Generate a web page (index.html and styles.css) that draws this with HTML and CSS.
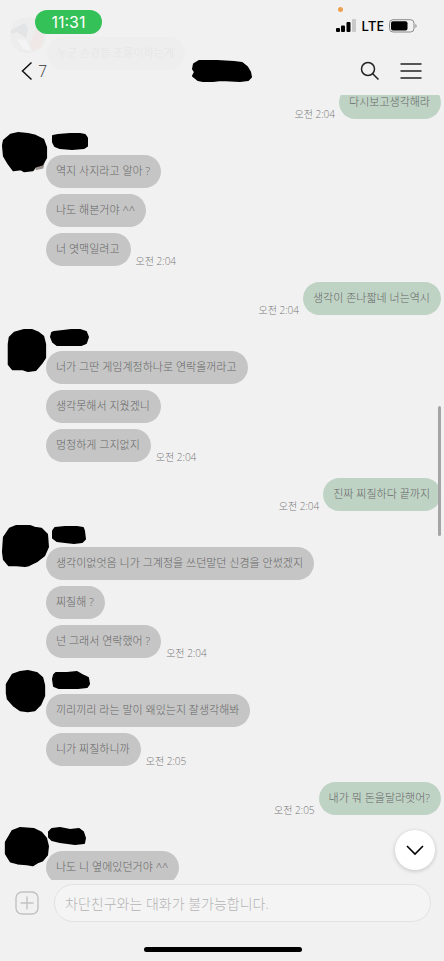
FILE: index.html
```html
<!DOCTYPE html>
<html lang="ko">
<head>
<meta charset="utf-8">
<meta name="viewport" content="width=device-width, initial-scale=1">
<title>채팅</title>
<link rel="stylesheet" href="styles.css">
</head>
<body>
<div class="app">
  <header class="header">
    <div class="ghost" aria-hidden="true">
      <svg class="ghost-avatar" viewBox="0 0 38 38"><circle cx="19" cy="19" r="18" fill="#ededed"/><path d="M2 14l14-7 3 6-2 9-9-6-6 2z" fill="#e3e4e6"/><path d="M27 12l8 9-3 10-8 4-3-8z" fill="#efe8e6"/><path d="M8 23l9 1 5 11-8-2z" fill="#f4f4f4"/></svg>
      <span class="ghost-bubble">누군 손경등 조롱이하는게</span>
    </div>
    <div class="status">
      <span class="clock">11:31</span>
      <span class="mic-dot"></span>
      <div class="status-right">
        <svg width="20" height="14" viewBox="0 0 20 14"><rect x="0" y="9" width="4" height="4" rx="1"/><rect x="5" y="6.500" width="4" height="6.500" rx="1"/><rect x="10.500" y="3" width="4" height="10" rx="1"/><rect x="16" y="0" width="4" height="13" rx="1" fill="#c9c9c9"/></svg>
        <span class="network">LTE</span>
        <svg width="28" height="14" viewBox="0 0 28 14"><rect x=".5" y=".7" width="24.500" height="12.300" rx="3.500" fill="none" stroke="#8a8a8a"/><rect x="2" y="2.200" width="16.500" height="9.300" rx="2"/><path d="M26.300 5v4q1.400-.6 1.400-2t-1.400-2z" fill="#999"/></svg>
      </div>
    </div>
    <nav class="nav">
      <button class="back" aria-label="뒤로"><svg width="12" height="20" viewBox="0 0 12 20"><path d="M10.500 1.500 1.500 10l9 8.500" fill="none" stroke="#111" stroke-width="1.500"/></svg><span>7</span></button>
      <svg class="title-mark" width="60" height="22" viewBox="0 0 60 22"><path d="M7 1 25 1l17 1 8 1 5 4 3 5 1 5-3 3-8 1-19-1-8 1H11l-5-1-5-4 2-4-2-3 1-5z"/></svg>
      <div class="actions">
        <button aria-label="검색"><svg width="20" height="20" viewBox="0 0 20 20"><g fill="none" stroke="#222" stroke-width="1.500"><circle cx="8" cy="8" r="6.500"/><path d="m12.700 12.700 5.800 5.800"/></g></svg></button>
        <button aria-label="메뉴"><svg width="22" height="20" viewBox="0 0 22 20"><path d="M.5 3h21M.5 10h21M.5 17h21" stroke="#222" stroke-width="1.500"/></svg></button>
      </div>
    </nav>
  </header>

  <main class="chat">
    <div class="thread">
      <div class="mine"><time>오전 2:04</time><p class="bubble">다시보고생각해라</p></div>

      <section class="group">
        <svg class="avatar" viewBox="-1 -1 52 50"><path d="M38 30h8l-2 9-8 2z" fill="#998f8b"/><path d="M10 4 18 2l10 1 8 2 8 4 3 8v11l-4 7-7 2-3 4-9 1-3-2-8 1-6-8-4-7-1-11 1-5z"/></svg>
        <div class="messages">
          <svg class="name" viewBox="0 0 60 25"><path d="m7 6 5-1 12-1h10l5 1 2 3v8l-3 2-12 1-12-1-5-2-2-4z"/></svg>
          <p class="bubble">역지 사지라고 알아 ?</p>
          <p class="bubble">나도 해본거야 ^^</p>
          <div class="last"><p class="bubble">너 엿맥일려고</p><time>오전 2:04</time></div>
        </div>
      </section>

      <div class="mine"><time>오전 2:04</time><p class="bubble">생각이 존나짧네 너는역시</p></div>

      <section class="group">
        <svg class="avatar" viewBox="-1 -1 52 50"><path d="m14 6 10-3h8l7 3 5 4 2 8v14l-4 6-6 7-8 1-6-2H12l-4-5V18l1-7z"/></svg>
        <div class="messages">
          <svg class="name" viewBox="0 0 60 25"><path d="m8 6 9-1 8-1h9l6 2 2 5-2 6-5 2H11l-4-3-2-5 1-4z"/></svg>
          <p class="bubble">너가 그딴 게임계정하나로 연락올꺼라고</p>
          <p class="bubble">생각못해서 지웠겠니</p>
          <div class="last"><p class="bubble">멍청하게 그지없지</p><time>오전 2:04</time></div>
        </div>
      </section>

      <div class="mine"><time>오전 2:04</time><p class="bubble">진짜 찌질하다 끝까지</p></div>

      <section class="group">
        <svg class="avatar" viewBox="-1 -1 52 50"><path d="m9 6 7-3h14l5 2 7 1 6 6 1 13-4 9-8 6-8 4-4 1-9-1H8l-5-6-1-8 1-15z"/></svg>
        <div class="messages">
          <svg class="name" viewBox="0 0 60 25"><path d="m9 6 10-1h12l6 1 1 3 1 8-3 3-8 1-9-1-8-1-4-3V9z"/></svg>
          <p class="bubble">생각이없엇음 니가 그계정을 쓰던말던 신경을 안썼겠지</p>
          <p class="bubble">찌질해 ?</p>
          <div class="last"><p class="bubble">넌 그래서 연락했어 ?</p><time>오전 2:04</time></div>
        </div>
      </section>

      <section class="group">
        <svg class="avatar" viewBox="-1 -1 52 50"><path d="m12 5 8-3 8-1 9 2 6 5 2 8v11l-4 9-6 6-7 1-8-1-7-5-6-7-1-6V15z"/></svg>
        <div class="messages">
          <svg class="name" viewBox="0 0 60 25"><path d="m10 4 11 0 10-1 7 4 4 2 1 6-2 3-9 1H13l-5-2-1-7 1-4z"/></svg>
          <p class="bubble">끼리끼리 라는 말이 왜있는지 잘생각해봐</p>
          <div class="last"><p class="bubble">니가 찌질하니까</p><time>오전 2:05</time></div>
        </div>
      </section>

      <div class="mine"><time>오전 2:05</time><p class="bubble">내가 뭐 돈을달라햇어?</p></div>

      <section class="group">
        <svg class="avatar" viewBox="-1 -1 52 50"><path d="m12 4 8-3 14 1 8 4 5 6 2 8-1 9-5 6-5 2-5 3-6-1-10-1-7-2-5-8V16z"/></svg>
        <div class="messages">
          <svg class="name" viewBox="0 0 60 25"><path d="m6 3 8-1 10 2 9-1 4 3 2 6-1 5-9 1-15-2-8-2-3-3V6z"/></svg>
          <p class="bubble">나도 니 옆에있던거야 ^^</p>
        </div>
      </section>
    </div>
    <span class="scrollbar"></span>
    <button class="jump" aria-label="맨 아래로"><svg width="20" height="12" viewBox="0 0 20 12"><path d="m2 2 8 8 8-8" fill="none" stroke="#000" stroke-width="1.600"/></svg></button>
  </main>

  <footer class="footer">
    <form class="composer">
      <button type="button" aria-label="추가"><svg width="24" height="24" viewBox="0 0 24 24"><g fill="none" stroke="#c2c2c2" stroke-width="1.400"><rect x="1" y="1" width="22" height="22" rx="6"/><path d="M5.500 12h13M12 5.500v13"/></g></svg></button>
      <input type="text" aria-label="메시지" placeholder="차단친구와는 대화가 불가능합니다." disabled>
    </form>
    <span class="home-bar"></span>
  </footer>
</div>
</body>
</html>
```
FILE: styles.css
```css
* { box-sizing: border-box; }

body {
  margin: 0;
  background: #f1f1f1;
  color: #666;
  font-family: "Open Sans", "Noto Sans CJK KR", sans-serif;
  font-size: 11px;
  font-weight: 300;
}

button {
  display: flex;
  align-items: center;
  padding: 0;
  border: 0;
  background: none;
  color: #333;
  font: inherit;
}

svg { display: block; flex: none; }
p { margin: 0; }

.app {
  display: flex;
  flex-direction: column;
  height: 100vh;
  overflow: hidden;
}

/* Header */
.header {
  position: relative;
  padding-top: 10px;
}

.ghost {
  position: absolute;
  top: 16px;
  left: 9px;
  display: flex;
}

.ghost-avatar { width: 38px; height: 38px; }

.ghost-bubble {
  margin-top: 21px;
  padding: 8px 11px 9px 10px;
  border-radius: 17px;
  background: #eee;
  color: #e4e4e4;
  line-height: 16px;
}

.status {
  position: relative;
  display: flex;
  justify-content: space-between;
  align-items: center;
  padding: 0 27px 0 35px;
}

.clock {
  width: 67px;
  border-radius: 12px;
  background: #34c158;
  color: #fff;
  font-family: Inter, sans-serif;
  font-size: 16px;
  font-weight: 400;
  line-height: 24px;
  text-align: center;
}

.mic-dot {
  position: absolute;
  top: -3px;
  right: 101px;
  width: 5px;
  height: 5px;
  border-radius: 50%;
  background: #eda04d;
}

.status-right {
  display: flex;
  align-items: center;
  gap: 5px;
  padding-top: 8px;
}

.network {
  color: #000;
  font-family: "Noto Sans", sans-serif;
  font-size: 14px;
  font-weight: 500;
  line-height: 16px;
}

.nav {
  position: relative;
  display: grid;
  grid-template-columns: 1fr auto 1fr;
  align-items: center;
  height: 61px;
  padding: 13px 22px 0 21px;
}

.nav > :last-child { justify-self: end; }

.back {
  gap: 5px;
  font-size: 16px;
}

.actions {
  display: flex;
  gap: 20px;
}

/* Conversation */
.chat {
  position: relative;
  flex: 1;
  min-height: 0;
  overflow: hidden;
}

.thread {
  display: flex;
  flex-direction: column;
  margin-top: -9px;
}

.bubble {
  width: fit-content;
  padding: 8px 11px 9px 10px;
  border-radius: 17px;
  background: #c5c5c5;
  line-height: 16px;
  white-space: nowrap;
}

time {
  color: #777;
  font-size: 10px;
  line-height: 10px;
}

.mine {
  display: flex;
  justify-content: flex-end;
  align-items: flex-end;
  gap: 4px;
  padding-right: 3px;
}

.mine .bubble { background: #bfd3c5; }

.group {
  display: grid;
  grid-template-columns: 46px 1fr;
  margin-top: 11px;
}

.group + .mine { margin-top: 16px; }

.avatar { width: 50px; height: 48px; }
.name { width: 60px; height: 25px; }

.messages .bubble + .bubble,
.bubble + .last { margin-top: 6px; }

.last {
  display: flex;
  align-items: flex-end;
  gap: 5px;
}

.avatar path:last-child,
.name path,
.title-mark path {
  stroke: #000;
  stroke-width: 2;
  stroke-linejoin: round;
}

.scrollbar {
  position: absolute;
  top: 311px;
  right: 3px;
  width: 3px;
  height: 130px;
  border-radius: 2px;
  background: #a5a5a5;
}

.jump {
  position: absolute;
  right: 9px;
  bottom: 10px;
  justify-content: center;
  width: 40px;
  height: 40px;
  border-radius: 50%;
  background: #fff;
  box-shadow: 0 1px 4px rgba(0, 0, 0, 0.2);
}

/* Composer */
.footer {
  display: flex;
  flex-direction: column;
  align-items: center;
  gap: 25px;
  padding: 4px 13px 9px 15px;
}

.composer {
  display: flex;
  align-items: center;
  gap: 15px;
  width: 100%;
}

.composer input {
  flex: 1;
  min-width: 0;
  height: 38px;
  padding: 0 10px;
  border: 1px solid #e2e2e2;
  border-radius: 19px;
  background: #f4f4f4;
  font: inherit;
  font-size: 14px;
}

.composer input::placeholder { color: #b5b5b5; }

.home-bar {
  width: 158px;
  height: 5px;
  border-radius: 3px;
  background: #000;
}
```
